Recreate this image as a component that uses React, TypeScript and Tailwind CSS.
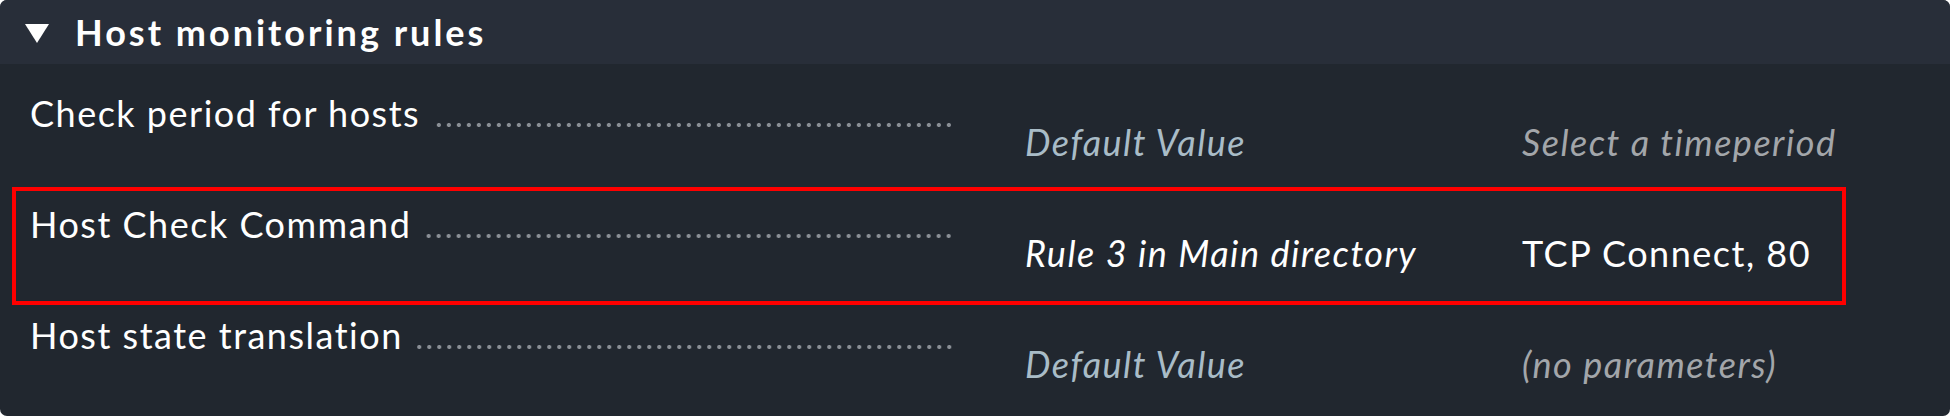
const rows = [
  {
    label: "Check period for hosts",
    source: "Default Value",
    value: "Select a timeperiod",
    sourceClass: "italic text-[#a9bcc7]",
    valueClass: "italic text-[#a3a6aa]",
    marked: false,
  },
  {
    label: "Host Check Command",
    source: "Rule 3 in Main directory",
    value: "TCP Connect, 80",
    sourceClass: "italic text-white",
    valueClass: "text-white",
    marked: true,
  },
  {
    label: "Host state translation",
    source: "Default Value",
    value: "(no parameters)",
    sourceClass: "italic text-[#a9bcc7]",
    valueClass: "italic text-[#a3a6aa]",
    marked: false,
  },
];

function RuleRow({ row }: { row: (typeof rows)[number] }) {
  return (
    <div className="relative grid h-[111px] grid-cols-[1025px_497px_1fr]">
      <div className="flex items-baseline pl-[30px] pr-[71px] pt-[11px]">
        <span className="whitespace-nowrap text-[36px] leading-[44px] tracking-[1.5px] text-white">
          {row.label}
        </span>
        <div className="ml-[13px] h-[4px] flex-1 bg-[radial-gradient(circle,#8a8f96_1.8px,transparent_2.3px)] bg-[length:10px_4px] bg-right" />
      </div>
      <div className={`pt-[40px] text-[36px] leading-[44px] tracking-[1.5px] ${row.sourceClass}`}>
        {row.source}
      </div>
      <div className={`pt-[40px] text-[36px] leading-[44px] tracking-[1.5px] ${row.valueClass}`}>
        {row.value}
      </div>

      {/* highlight box drawn over the row */}
      {row.marked && (
        <div className="pointer-events-none absolute -top-[4px] -bottom-[3px] left-[12px] w-[1834px] border-4 border-[#ff0000]" />
      )}
    </div>
  );
}

export default function App() {
  return (
    <div className="h-[416px] w-[1950px] bg-white font-['Lato',sans-serif]">
      <div className="flex h-full flex-col overflow-hidden rounded-[7px] bg-[#21272f]">
        {/* HEADER */}
        <div className="flex h-[64px] items-center bg-[#282e39] pl-[25px]">
          <svg width="24" height="19" viewBox="0 0 24 19" className="mt-[2px]">
            <polygon points="0,0 24,0 12,19" fill="#ffffff" />
          </svg>
          <span className="ml-[26px] text-[36px] font-bold leading-[44px] tracking-[3px] text-white">
            Host monitoring rules
          </span>
        </div>

        {/* ROWS */}
        <div className="pt-[16px]">
          {rows.map((row) => (
            <RuleRow key={row.label} row={row} />
          ))}
        </div>
      </div>
    </div>
  );
}
